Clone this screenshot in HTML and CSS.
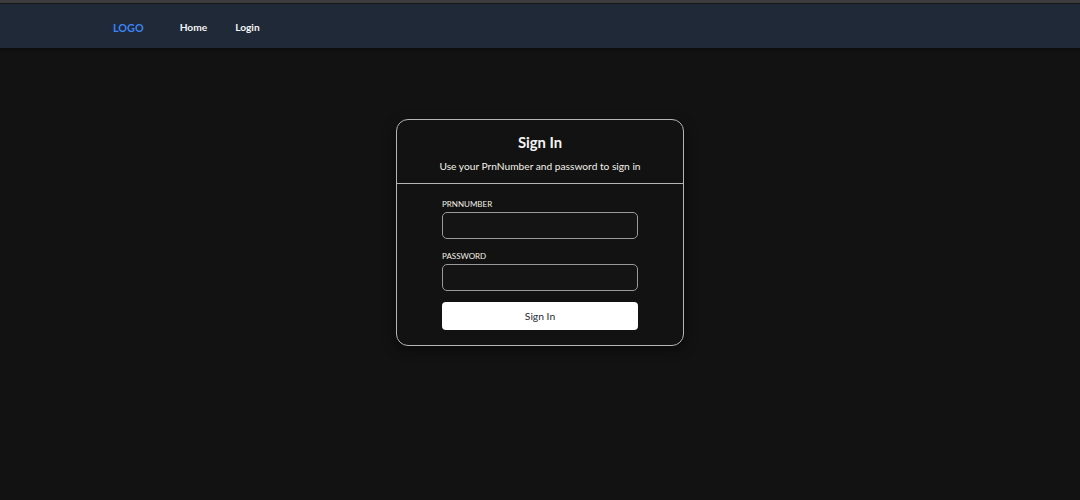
FILE: index.html
```html
<!DOCTYPE html>
<html>
<head>
<meta charset="utf-8">
<link rel="stylesheet" href="styles.css">
</head>
<body>
<div class="topline"></div>
<nav class="nav">
  <span class="logo">LOGO</span>
  <a class="nav-link home">Home</a>
  <a class="nav-link login">Login</a>
</nav>
<main class="main">
  <section class="card">
    <header class="card-head">
      <h1 class="title">Sign In</h1>
      <p class="subtitle">Use your PrnNumber and password to sign in</p>
    </header>
    <form class="card-body">
      <label class="label">PRNNUMBER</label>
      <div class="input"></div>
      <label class="label second">PASSWORD</label>
      <div class="input"></div>
      <div class="button">Sign In</div>
    </form>
  </section>
</main>
</body>
</html>
```
FILE: styles.css
```css
html, body {
  margin: 0;
  padding: 0;
  background: #121212;
  font-family: Lato, "Open Sans", sans-serif;
  height: 100%;
}
.topline {
  height: 3px;
  background: #3d3d3d;
  border-bottom: 1px solid #1a1a1a;
}
.nav {
  height: 42px;
  padding-top: 2px;
  background: #1f2937;
  display: flex;
  align-items: center;
  padding-left: 113px;
  box-shadow: 0 1px 3px rgba(0,0,0,0.4);
}
.logo {
  color: #3b82f6;
  font-weight: 700;
  font-size: 10.8px;
}
.nav-link {
  color: #f3f4f6;
  font-weight: 700;
  font-size: 10.2px;
}
.home { margin-left: 36px; }
.login { margin-left: 28px; }
.main {
  display: flex;
  justify-content: center;
  padding-top: 71px;
}
.card {
  width: 286px;
  border: 1px solid #b5b5b5;
  border-radius: 12px;
  box-shadow: 0 4px 12px rgba(0,0,0,0.5);
  background: #121212;
}
.card-head {
  text-align: center;
  padding: 10px 0 9px;
  border-bottom: 1px solid #b5b5b5;
}
.title {
  margin: 0;
  color: #f5f5f5;
  font-size: 14.8px;
  font-weight: 700;
  line-height: 24px;
}
.subtitle {
  margin: 4px 0 0;
  color: #f3f1e8;
  font-size: 10.2px;
  line-height: 16px;
}
.card-body {
  display: flex;
  flex-direction: column;
  padding: 13px 45px 15px;
  margin: 0;
}
.label {
  color: #f3f1e8;
  font-size: 8px;
  line-height: 14px;
  margin-bottom: 1px;
}
.label.second { margin-top: 10px; }
.input {
  height: 25px;
  border: 1px solid #9a9a9a;
  border-radius: 5px;
  background: #141414;
}
.button {
  margin-top: 11px;
  height: 28px;
  background: #ffffff;
  border-radius: 4px;
  color: #1f2937;
  font-size: 10.3px;
  display: flex;
  align-items: center;
  justify-content: center;
}
```
